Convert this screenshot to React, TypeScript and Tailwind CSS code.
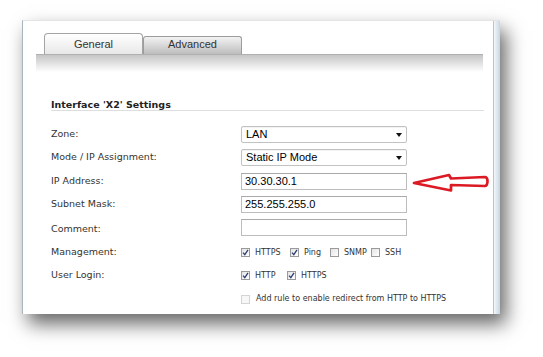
import React from "react";

const label = "font-['DejaVu_Sans',sans-serif] text-[9.5px] text-[#333]";
const small = "font-['DejaVu_Sans',sans-serif] text-[8px] text-[#333]";

const Check = ({ checked, disabled }: { checked?: boolean; disabled?: boolean }) => (
  <span
    className={
      "w-[9px] h-[9px] shrink-0 border flex items-center justify-center " +
      (disabled
        ? "border-[#d4d4d4] bg-[#f7f7f7]"
        : "border-[#9a9a9a] bg-gradient-to-br from-[#e4e4e4] to-white")
    }
  >
    {checked && (
      <svg width="7" height="7" viewBox="0 0 7 7">
        <path d="M1 3.6 L2.8 5.6 L6 0.8" fill="none" stroke="#2c3f73" strokeWidth="1.3" />
      </svg>
    )}
  </span>
);

const Opt = ({ text, checked, w }: { text: string; checked?: boolean; w?: string }) => (
  <div className={"flex items-center gap-[5px] " + (w ?? "")}>
    <Check checked={checked} />
    <span className={small}>{text}</span>
  </div>
);

const Select = ({ value }: { value: string }) => (
  <div className="w-[166px] h-[17px] border border-[#c2c2c2] rounded-[2px] bg-white flex items-center justify-between pl-[4px] pr-[4px] shadow-[inset_0_1px_0_#f2f2f2]">
    <span className="font-['Liberation_Sans',sans-serif] text-[11px] text-black leading-none">{value}</span>
    <svg width="6" height="4" viewBox="0 0 6 4">
      <path d="M0 0 H6 L3 4 Z" fill="#111" />
    </svg>
  </div>
);

const Input = ({ value }: { value?: string }) => (
  <div className="w-[166px] h-[17px] border border-[#bdbdbd] border-t-[#a9a9a9] bg-white flex items-center pl-[3px]">
    <span className="font-['Liberation_Sans',sans-serif] text-[11px] text-black leading-none">{value}</span>
  </div>
);

export default function App() {
  return (
    <div className="w-[543px] h-[357px] bg-white overflow-hidden pt-[20px] pl-[22px]">
      <div className="w-[478px] h-[294px] bg-white flex border-l border-t border-l-[#a9b4bc] border-t-[#e4e4e4] shadow-[6px_10px_18px_rgba(0,0,0,0.6)]">
        <div className="flex-1 relative pt-[12px] pl-[13px]">
          {/* tabs */}
          <div className="flex items-end pl-[8px] h-[21px]">
            <div className="w-[99px] h-[21px] border border-b-0 border-[#a4a4a4] rounded-t-[4px] bg-gradient-to-b from-white to-[#e8e8e8] flex items-center justify-center">
              <span className="font-['Liberation_Sans',sans-serif] text-[11px] text-[#333]">General</span>
            </div>
            <div className="w-[99px] h-[18px] border border-b-0 border-[#9c9c9c] rounded-t-[3px] bg-gradient-to-b from-[#f3f3f3] to-[#bdbdbd] flex items-center justify-center pb-[2px]">
              <span className="font-['Liberation_Sans',sans-serif] text-[11px] text-[#333]">Advanced</span>
            </div>
          </div>
          <div className="w-[447px] h-[18px] border-t border-[#b0b0b0] bg-gradient-to-b from-[#c6c6c6] to-white" />

          {/* heading */}
          <div className="ml-[15px] mt-[25px] w-[433px] h-[14px] border-b border-[#dedede]">
            <span className="font-['DejaVu_Sans',sans-serif] font-bold text-[9.5px] text-[#222] leading-[16px] block">
              Interface 'X2' Settings
            </span>
          </div>

          {/* form */}
          <div className="ml-[15px] mt-[12px] grid grid-cols-[190px_1fr]">
            <div className={label + " h-[23px] flex items-center"}>Zone:</div>
            <div className="h-[23px] flex items-center"><Select value="LAN" /></div>

            <div className={label + " h-[23px] flex items-center"}>Mode / IP Assignment:</div>
            <div className="h-[23px] flex items-center"><Select value="Static IP Mode" /></div>

            <div className={label + " h-[24px] flex items-center"}>IP Address:</div>
            <div className="h-[24px] flex items-center"><Input value="30.30.30.1" /></div>

            <div className={label + " h-[23px] flex items-center"}>Subnet Mask:</div>
            <div className="h-[23px] flex items-center"><Input value="255.255.255.0" /></div>

            <div className={label + " h-[23px] flex items-center pt-[4px]"}>Comment:</div>
            <div className="h-[23px] flex items-center"><Input /></div>

            <div className={label + " h-[23px] mt-[2px] flex items-center"}>Management:</div>
            <div className="h-[23px] mt-[2px] flex items-center">
              <Opt text="HTTPS" checked w="w-[49px]" />
              <Opt text="Ping" checked w="w-[40px]" />
              <Opt text="SNMP" w="w-[41px]" />
              <Opt text="SSH" />
            </div>

            <div className={label + " h-[23px] flex items-center"}>User Login:</div>
            <div className="h-[23px] flex items-center">
              <Opt text="HTTP" checked w="w-[46px]" />
              <Opt text="HTTPS" checked />
            </div>

            <div className="h-[24px]" />
            <div className="h-[24px] flex items-center gap-[6px]">
              <Check disabled />
              <span className={small}>Add rule to enable redirect from HTTP to HTTPS</span>
            </div>
          </div>

          {/* annotation arrow */}
          <svg className="absolute left-[389px] top-[151px]" width="78" height="22" viewBox="0 0 78 22">
            <path
              d="M2 11 L37 3 L39 6.5 L73 5 Q75.5 5.5 75.5 9 Q75.5 13.5 73 14 L39 13 L39 18.5 Z"
              fill="white"
              stroke="#dc1a24"
              strokeWidth="2.7"
              strokeLinejoin="round"
            />
          </svg>
        </div>
        <div className="w-[7px] border-l border-[#b8c4cf] bg-gradient-to-r from-[#f2f7fb] to-[#c8d6e3]" />
      </div>
    </div>
  );
}
